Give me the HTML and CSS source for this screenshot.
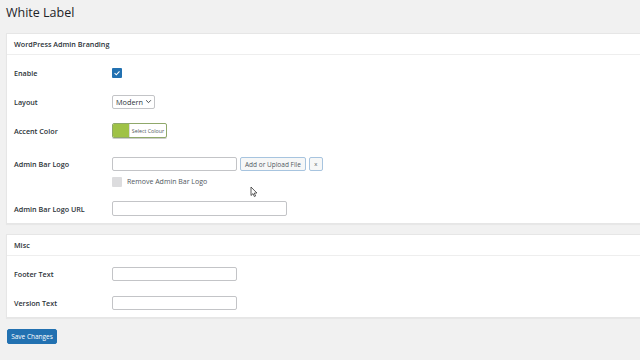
FILE: index.html
```html
<!DOCTYPE html>
<html lang="en">
<head>
   <meta charset="UTF-8">
   <title>White Label</title>
   <link rel="stylesheet" href="styles.css">
</head>
<body>
   <h1 class="page-title">White Label</h1>

   <div class="card">
       <div class="card-head">WordPress Admin Branding</div>
       <div class="card-body">
           <div class="row">
               <label>Enable</label>
               <div class="cell"><span class="check"><svg viewBox="0 0 10 10" width="10" height="10"><path d="M2.6 5.2 L4.3 6.8 L7.5 3.4" fill="none" stroke="#fff" stroke-width="1.1"/></svg></span></div>
           </div>
           <div class="row">
               <label>Layout</label>
               <div class="cell"><span class="select">Modern <svg viewBox="0 0 8 8" width="7" height="7"><path d="M1.3 2.6 L4 5.3 L6.7 2.6" fill="none" stroke="#2c3338" stroke-width="1"/></svg></span></div>
           </div>
           <div class="row">
               <label>Accent Color</label>
               <div class="cell"><span class="color-btn"><span class="swatch"></span><span class="color-text">Select Colour</span></span></div>
           </div>
           <div class="row row-top">
               <label>Admin Bar Logo</label>
               <div class="stack">
                   <div class="inline">
                       <input type="text" class="text-input">
                       <button type="button" class="btn-light">Add or Upload File</button>
                       <button type="button" class="btn-light btn-x">x</button>
                   </div>
                   <div class="inline inline-check">
                       <span class="check check-off"></span>
                       <span class="hint">Remove Admin Bar Logo</span>
                   </div>
               </div>
           </div>
           <div class="row">
               <label>Admin Bar Logo URL</label>
               <div class="cell"><input type="text" class="text-input wide"></div>
           </div>
       </div>
   </div>

   <div class="card card-misc">
       <div class="card-head">Misc</div>
       <div class="card-body">
           <div class="row">
               <label>Footer Text</label>
               <div class="cell"><input type="text" class="text-input"></div>
           </div>
           <div class="row">
               <label>Version Text</label>
               <div class="cell"><input type="text" class="text-input"></div>
           </div>
       </div>
   </div>

   <button type="button" class="btn-primary">Save Changes</button>

   <svg class="cursor" viewBox="0 0 8 12" width="8" height="12"><path d="M1 1 L1 9.5 L3 7.6 L4.4 10.6 L5.6 10 L4.3 7.1 L6.9 7 Z" fill="#fff" stroke="#333" stroke-width="0.8"/></svg>
</body>
</html>
```

FILE: styles.css
```css
* { margin: 0; padding: 0; box-sizing: border-box; }
html, body {
    width: 100%; height: 100%; overflow: hidden;
    background-color: #f1f1f1; color: #1d2327;
    font-family: 'Open Sans', 'Noto Sans', sans-serif;
}
body { padding-left: 6px; position: relative; }
.page-title {
    font-size: 12.5px; font-weight: 400; line-height: 14px;
    padding-top: 6px; color: #1d2327;
}
.card {
    margin-top: 13px; background: #fff;
    border: 1px solid #e6e6e6; border-right: none;
    box-shadow: 0 1px 1px rgba(0, 0, 0, 0.04);
}
.card-misc { margin-top: 10px; }
.card-head {
    height: 21px; padding: 0 7px;
    display: flex; align-items: center;
    border-bottom: 1px solid #eee;
    font-size: 7.2px; font-weight: 600; color: #2c3338;
}
.card-body { padding: 3px 7px 0; }
.row {
    display: grid; grid-template-columns: 98px 1fr;
    height: 29px; align-items: center;
}
.row label { font-size: 7.2px; font-weight: 600; color: #2c3338; line-height: 10px; }
.cell { display: flex; align-items: center; }
.row-top { height: auto; align-items: start; padding: 12px 0 7px; }
.row-top label { line-height: 14px; }
.stack { display: flex; flex-direction: column; gap: 6px; }
.inline { display: flex; align-items: center; gap: 3px; height: 14px; }
.inline-check { height: 10px; }
.check {
    display: flex; width: 10px; height: 10px;
    background: #2271b1; border-radius: 1px;
}
.check-off { background: #dcdcde; margin-right: 2px; }
.hint { font-size: 7px; line-height: 10px; color: #50575e; }
.select {
    display: inline-flex; align-items: center; justify-content: space-between;
    height: 14px; width: 43px; padding: 0 2px 0 3px;
    border: 1px solid #c3c4c7; border-radius: 2px;
    font-size: 7.3px; color: #2c3338; white-space: nowrap;
}
.select svg { flex-shrink: 0; }
.color-btn {
    display: inline-flex; height: 15px; width: 55px;
    border: 1px solid #8fa86a; border-radius: 2px; overflow: hidden;
    box-shadow: 0 1px 0 #ccc;
}
.swatch { width: 16px; background: #9fc246; }
.color-text {
    flex: 1; display: flex; align-items: center; justify-content: center;
    font-size: 5.3px; color: #50575e; border-left: 1px solid #dcdcde;
}
.text-input {
    width: 125px; height: 14px;
    border: 1px solid #c3c4c7; border-radius: 2px;
    background: #fff; outline: none;
}
.text-input.wide { width: 175px; height: 15px; }
.btn-light {
    height: 14px; padding: 0 4px;
    background: #f6f7f7; color: #50575e;
    border: 1px solid #a7c4df; border-radius: 2px;
    font-family: inherit; font-size: 6.5px;
}
.btn-x { width: 14px; padding: 0; font-size: 6px; }
.btn-primary {
    display: block;
    margin: 11px 0 0 1px; width: 50px; height: 15px;
    background: #2271b1; color: #fff; border: 1px solid #2271b1;
    border-radius: 2px; font-family: inherit; font-size: 6.5px;
}
.cursor { position: absolute; left: 250px; top: 186px; }
```
